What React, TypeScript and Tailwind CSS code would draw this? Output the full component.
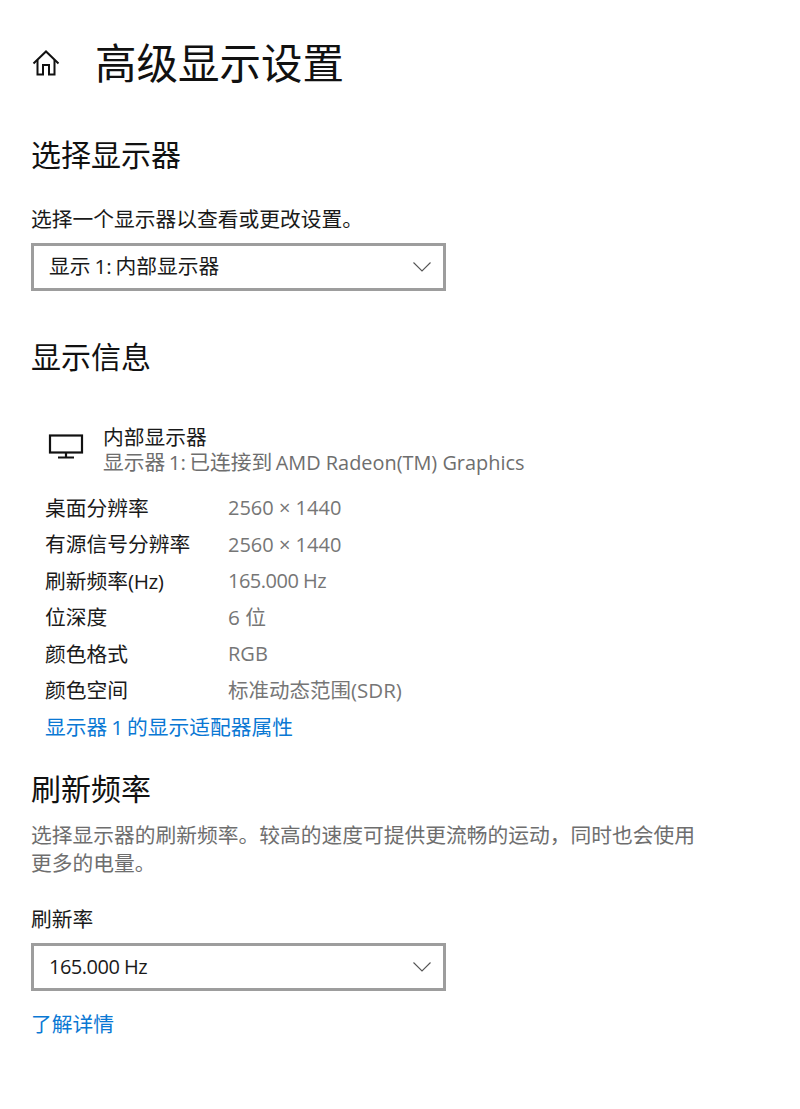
import React from "react";

const displayRows = [
  { label: <>桌面分辨率</>, value: "2560 × 1440", valueClass: "text-[20px]" },
  { label: <>有源信号分辨率</>, value: "2560 × 1440", valueClass: "text-[20px]" },
  {
    label: (
      <>
        刷新频率<span className="tracking-[-0.5px]">(Hz)</span>
      </>
    ),
    value: "165.000 Hz",
    valueClass: "text-[20px] tracking-[-0.5px]",
  },
  { label: <>位深度</>, value: "6 位", valueClass: "text-[20.75px]" },
  { label: <>颜色格式</>, value: "RGB", valueClass: "text-[20px]" },
  { label: <>颜色空间</>, value: "标准动态范围(SDR)", valueClass: "text-[20.5px]" },
];

const Chevron = () => (
  <svg width="20" height="12" viewBox="0 0 20 12" fill="none" stroke="#555555" strokeWidth="1.1">
    <path d="M1.5 1.5 L10 10 L18.5 1.5" />
  </svg>
);

const Select = ({ children }: { children: React.ReactNode }) => (
  <div className="flex items-center justify-between w-[415px] h-[48px] border-[3px] border-[#9d9d9d] pl-[15px] pr-[11px] text-[#1a1a1a]">
    <span>{children}</span>
    <Chevron />
  </div>
);

const App = () => {
  return (
    <div className="w-[800px] h-[1109px] bg-white overflow-hidden pl-[31px] font-['Open_Sans','Noto_Sans_CJK_SC',sans-serif] text-[#111111]">
      <div className="flex items-center h-[64px] mt-[31px]">
        <svg width="30" height="30" viewBox="0 0 30 30" fill="none" stroke="#111111" strokeWidth="2">
          <path d="M2.5 15.5 L15 3.5 L27.5 15.5" />
          <path d="M6.5 12 V26.5 H12 V17 H18 V26.5 H23.5 V12" />
        </svg>
        <h1 className="ml-[34px] text-[41.5px] leading-[64px] font-normal">高级显示设置</h1>
      </div>

      <h2 className="mt-[38px] text-[30px] leading-[44px] font-normal">选择显示器</h2>
      <p className="mt-[26px] text-[20.75px] leading-[32px] text-[#1a1a1a]">选择一个显示器以查看或更改设置。</p>
      <div className="mt-[8px]">
        <Select>
          <span className="text-[20.75px] [word-spacing:-1.5px]">显示 1: 内部显示器</span>
        </Select>
      </div>

      <h2 className="mt-[44px] text-[30px] leading-[44px] font-normal">显示信息</h2>

      <div className="flex items-start mt-[46px] ml-[17px]">
        <svg width="36" height="25" viewBox="0 0 36 25" fill="none" stroke="#111111" strokeWidth="2.2" className="mt-[9px]">
          <rect x="2" y="1.5" width="32" height="17" />
          <path d="M18 18 V23.5 M10 23.5 H26" />
        </svg>
        <div className="ml-[19px]">
          <div className="text-[20.75px] leading-[25px] text-[#1a1a1a]">内部显示器</div>
          <div className="leading-[25px] text-[#6e6e6e]">
            <span className="text-[20.75px] [word-spacing:-2px]">显示器 1: 已连接到 </span>
            <span className="text-[19.9px]">AMD Radeon(TM) Graphics</span>
          </div>
        </div>
      </div>

      <div className="mt-[13px] ml-[14px]">
        {displayRows.map((row) => (
          <div key={row.value + String(row.valueClass)} className="flex items-center h-[36.5px] text-[20.75px]">
            <span className="w-[183px] text-[#1a1a1a]">{row.label}</span>
            <span className={`text-[#767676] ${row.valueClass}`}>{row.value}</span>
          </div>
        ))}
        <div className="h-[36.5px] flex items-center text-[20.75px] text-[#0a78d4] [word-spacing:-1.5px]">显示器 1 的显示适配器属性</div>
      </div>

      <h2 className="mt-[21px] text-[30px] leading-[44px] font-normal">刷新频率</h2>
      <p className="mt-[10px] w-[680px] text-[20.75px] leading-[28px] text-[#6e6e6e]">
        选择显示器的刷新频率。较高的速度可提供更流畅的运动，同时也会使用更多的电量。
      </p>
      <p className="mt-[26px] text-[20.75px] leading-[32px] text-[#1a1a1a]">刷新率</p>
      <div className="mt-[8px]">
        <Select>
          <span className="text-[20px] tracking-[-0.5px]">165.000 Hz</span>
        </Select>
      </div>
      <a className="block mt-[14px] text-[20.75px] leading-[38px] text-[#0a78d4]">了解详情</a>
    </div>
  );
};

export default App;
